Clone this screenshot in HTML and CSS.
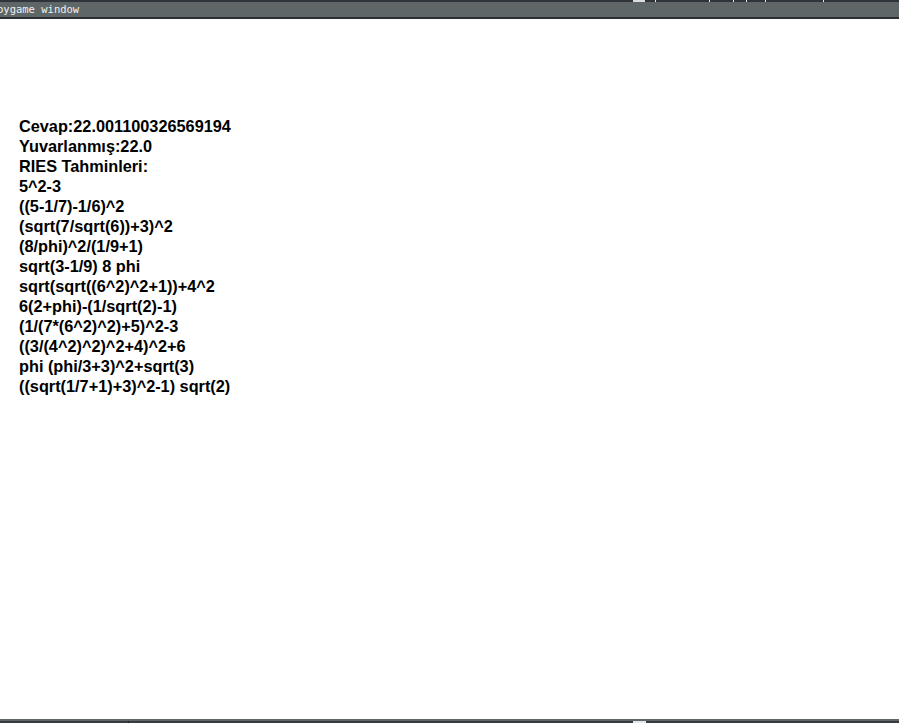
FILE: index.html
```html
<!DOCTYPE html>
<html>
<head>
<meta charset="utf-8">
<link rel="stylesheet" href="styles.css">
</head>
<body>
<div class="screen">
  <div class="topstrip">
    <span class="gap g1"></span><span class="tick light"></span>
    <span class="gap g2"></span><span class="tick"></span>
    <span class="gap g3"></span><span class="tick"></span>
    <span class="gap g4"></span><span class="tick"></span>
    <span class="gap g5"></span><span class="tick"></span>
    <span class="gap g6"></span><span class="tick"></span>
    <span class="gap g7"></span><span class="tick"></span>
  </div>
  <div class="titlebar"><span class="title">pygame window</span></div>
  <div class="titleline"></div>
  <main class="content">
    <div class="line">Cevap:22.001100326569194</div>
    <div class="line">Yuvarlanmış:22.0</div>
    <div class="line">RIES Tahminleri:</div>
    <div class="line">5^2-3</div>
    <div class="line">((5-1/7)-1/6)^2</div>
    <div class="line">(sqrt(7/sqrt(6))+3)^2</div>
    <div class="line">(8/phi)^2/(1/9+1)</div>
    <div class="line">sqrt(3-1/9) 8 phi</div>
    <div class="line">sqrt(sqrt((6^2)^2+1))+4^2</div>
    <div class="line">6(2+phi)-(1/sqrt(2)-1)</div>
    <div class="line">(1/(7*(6^2)^2)+5)^2-3</div>
    <div class="line">((3/(4^2)^2)^2+4)^2+6</div>
    <div class="line">phi (phi/3+3)^2+sqrt(3)</div>
    <div class="line">((sqrt(1/7+1)+3)^2-1) sqrt(2)</div>
  </main>
  <div class="bottomline"></div>
  <div class="bottombar">
    <span class="bgap b1"></span><span class="btick dark"></span>
    <span class="bgap b2"></span><span class="bblock"></span>
  </div>
</div>
</body>
</html>
```
FILE: styles.css
```css
html, body {
  margin: 0;
  padding: 0;
  background: #ffffff;
}
.screen {
  width: 899px;
  height: 723px;
  overflow: hidden;
  display: flex;
  flex-direction: column;
}
.topstrip {
  height: 2px;
  background: #2f333b;
  display: flex;
  flex-shrink: 0;
}
.gap { display: block; height: 2px; }
.tick { display: block; width: 1px; height: 2px; background: #e8e8e8; }
.tick.light { width: 12px; background: #dcdcdc; }
.g1 { width: 633px; }
.g2 { width: 10px; }
.g3 { width: 53px; }
.g4 { width: 23px; }
.g5 { width: 12px; }
.g6 { width: 18px; }
.g7 { width: 57px; }
.titlebar {
  height: 15px;
  background: #5e6667;
  flex-shrink: 0;
  display: flex;
  align-items: center;
  overflow: hidden;
}
.title {
  font-family: "DejaVu Sans Mono", monospace;
  font-size: 10.5px;
  color: #eef0f0;
  margin-left: -3px;
  line-height: 15px;
  white-space: nowrap;
}
.titleline {
  height: 2px;
  background: #2b2e33;
  flex-shrink: 0;
}
.content {
  flex: 1;
  background: #ffffff;
  padding: 97px 0 0 19px;
  font-family: "Liberation Sans", Arial, sans-serif;
  font-weight: bold;
  font-size: 16.3px;
  line-height: 20px;
  color: #000000;
}
.line { white-space: nowrap; }
.bottomline {
  height: 2px;
  background: #5e6667;
  flex-shrink: 0;
}
.bottombar {
  height: 2px;
  background: #363a42;
  flex-shrink: 0;
  display: flex;
}
.bgap { display: block; height: 2px; }
.b1 { width: 128px; }
.btick { display: block; width: 1px; height: 2px; background: #1e2024; }
.b2 { width: 504px; }
.bblock { display: block; width: 13px; height: 2px; background: #e6e6e6; }
```
